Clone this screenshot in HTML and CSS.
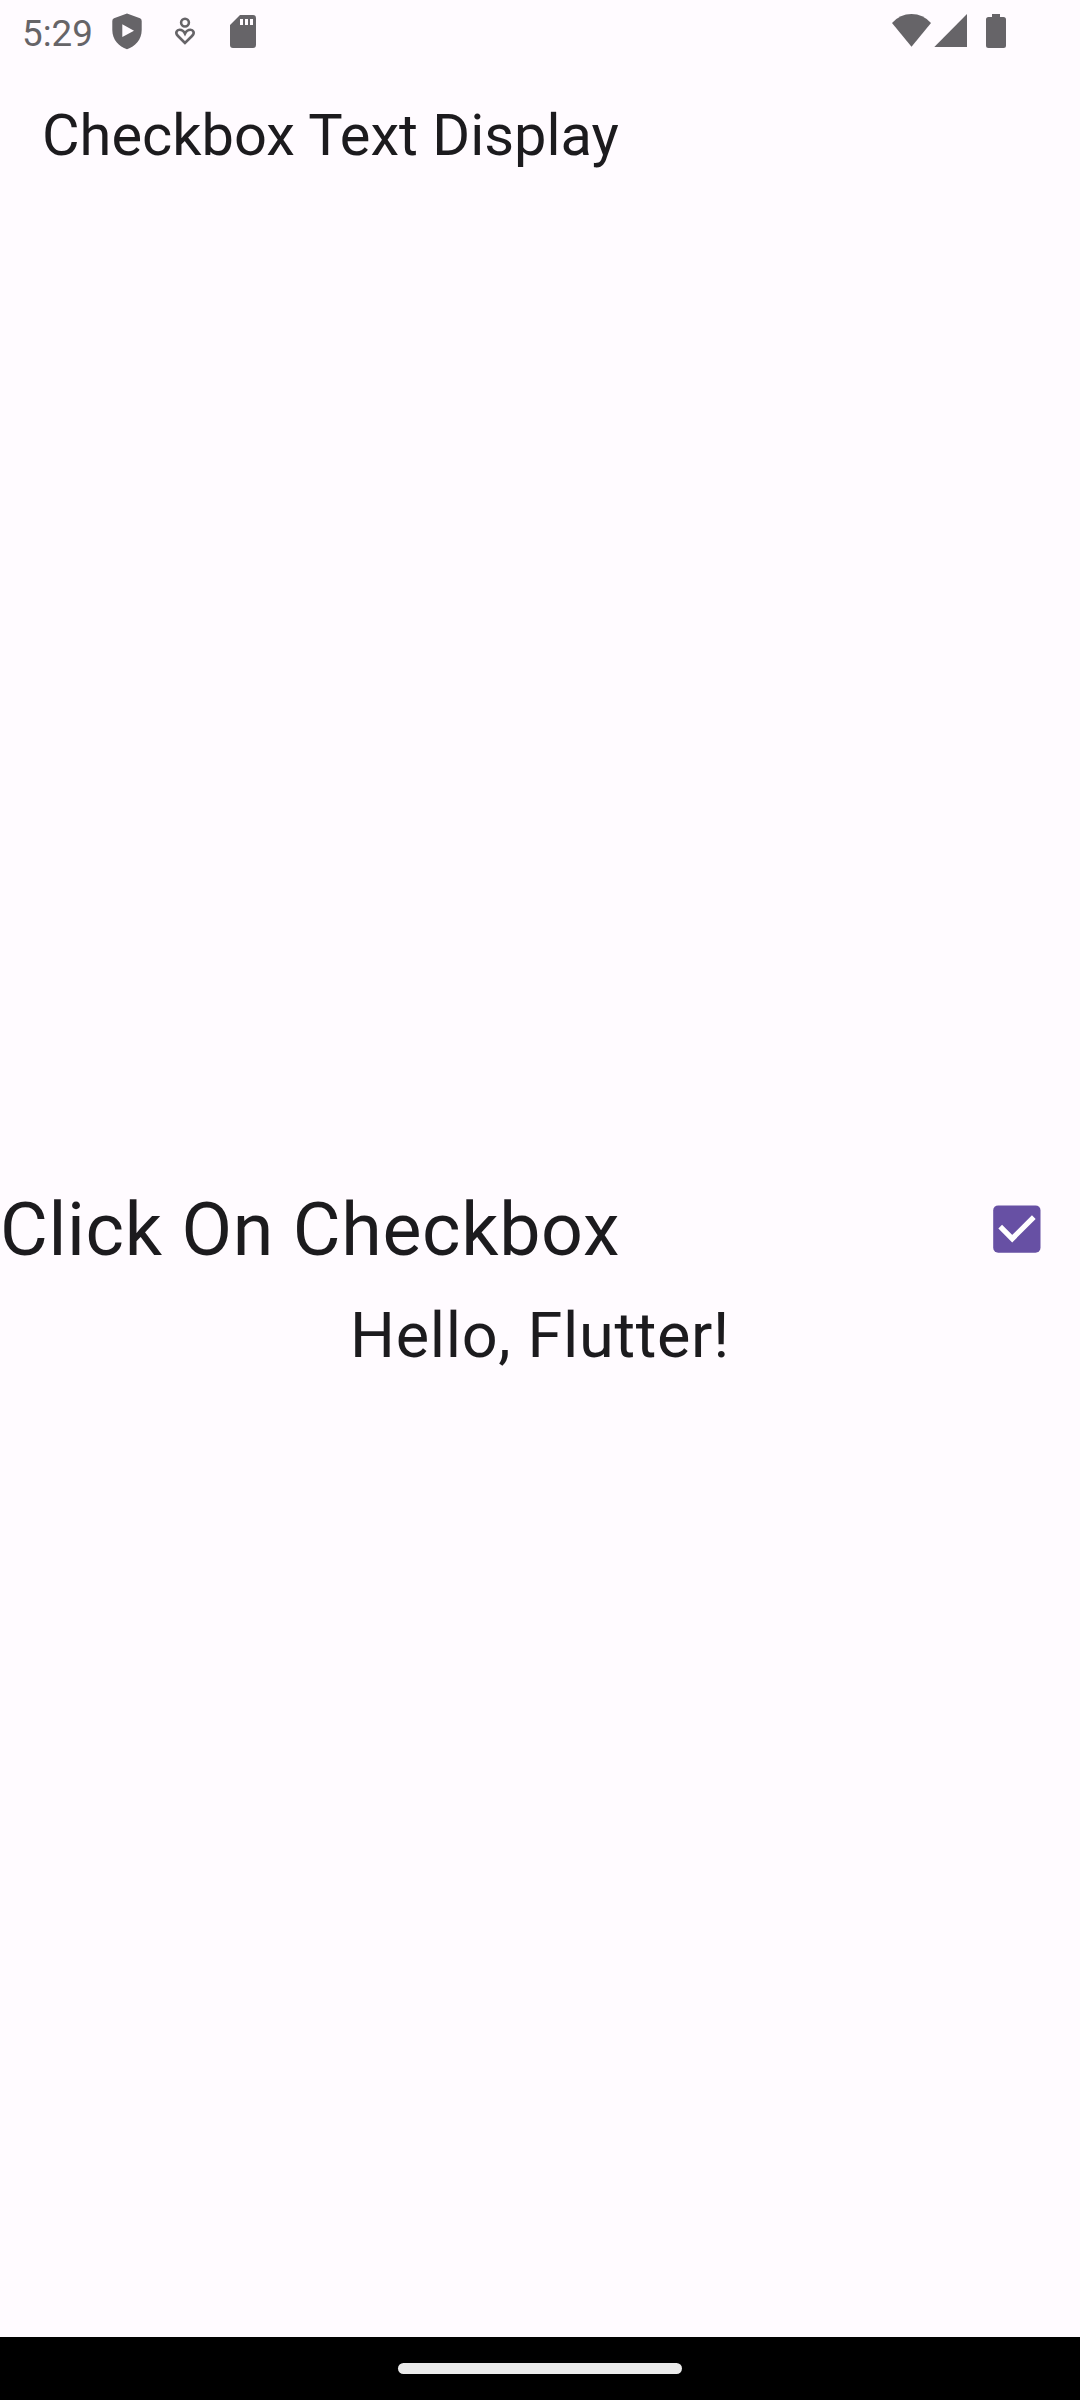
FILE: index.html
```html
<!DOCTYPE html>
<html lang="en">
<head>
<meta charset="utf-8">
<title>Checkbox Text Display</title>
<link rel="stylesheet" href="styles.css">
</head>
<body>
<div class="screen">
  <header class="status-bar">
    <span class="clock">5:29</span>
    <svg class="notifications" width="160" height="63" viewBox="100 0 160 63" aria-hidden="true">
      <path fill-rule="evenodd" d="M127 13.5L140 18.2Q141.7 19 141.7 21V30C141.7 40 135 46.5 127 49.3C119 46.5 112.300 40 112.300 30V21Q112.300 19 114 18.200ZM122.300 24.300V37L134 30.700Z"/>
      <circle class="line" cx="185" cy="22.600" r="3.900"/>
      <path class="line" d="M185 43L178 36C174.500 32.500 177.200 29.800 179.500 29.800C182 29.800 184 31.500 185 33.600C186 31.500 188 29.800 190.500 29.800C192.800 29.800 195.500 32.500 192 36Z"/>
      <path fill-rule="evenodd" d="M240 15H253Q256 15 256 18V45Q256 48 253 48H233Q230 48 230 45V25ZM240 19V25H243V19ZM245 19V25H248V19ZM250 19V25H253V19Z"/>
    </svg>
    <svg class="system" width="120" height="63" viewBox="890 0 120 63" aria-hidden="true">
      <path d="M911.500 46.700L892 23Q900 14 911.500 14T931 23Z"/>
      <path d="M934.300 47L967 14V47Z"/>
      <path d="M992 14H1000V17H1003.500Q1006 17 1006 19.500V45.500Q1006 48 1003.500 48H988.500Q986 48 986 45.500V19.500Q986 17 988.500 17H992Z"/>
    </svg>
  </header>
  <div class="app-bar"><h1 class="title">Checkbox Text Display</h1></div>
  <main class="content">
    <label class="option">
      <span class="option-label">Click On Checkbox</span>
      <span class="checkbox">
        <svg width="48" height="48" viewBox="0 0 48 48" aria-hidden="true">
          <rect class="box" x=".2" y=".4" width="47.300" height="47.300" rx="5"/>
          <path class="tick" d="M7.200 21.700L19.200 33.700L40.800 12.200"/>
        </svg>
      </span>
    </label>
    <p class="message">Hello, Flutter!</p>
  </main>
  <footer class="nav-bar"><div class="handle"></div></footer>
</div>
</body>
</html>
```
FILE: styles.css
```css
body {
  margin: 0;
  background: #fffbff;
  color: #1c1b1e;
  font-family: Roboto, sans-serif;
}

.screen {
  display: flex;
  flex-direction: column;
  width: 1080px;
  height: 2400px;
}

.status-bar {
  display: flex;
  height: 63px;
  padding: 0 70px 0 22px;
  color: #666468;
  fill: #666468;
}

.clock {
  width: 78px;
  font-size: 36.75px;
  line-height: 68px;
  white-space: nowrap;
}

.system {
  margin-left: auto;
}

.line {
  fill: none;
  stroke: #666468;
  stroke-width: 2.6;
}

.app-bar {
  display: flex;
  align-items: center;
  box-sizing: border-box;
  height: 147px;
  padding: 0 42px 3px;
}

.title {
  margin: 0;
  font-size: 57.75px;
  font-weight: 400;
  line-height: 73px;
}

.content {
  display: flex;
  flex: 1;
  flex-direction: column;
  justify-content: center;
}

.option {
  display: flex;
  align-items: center;
  justify-content: space-between;
  height: 126px;
}

.option-label {
  padding-top: 2px;
  font-size: 73.5px;
  letter-spacing: 0.656px;
}

.checkbox {
  display: flex;
  align-items: center;
  justify-content: center;
  width: 126px;
  height: 126px;
}

.box {
  fill: #6750a4;
}

.tick {
  fill: none;
  stroke: #fff;
  stroke-width: 5.25;
}

.message {
  margin: 0;
  padding-bottom: 2px;
  font-size: 63px;
  letter-spacing: 0.656px;
  line-height: 88px;
  text-align: center;
}

.nav-bar {
  display: flex;
  justify-content: center;
  height: 63px;
  background: #000;
}

.handle {
  width: 284px;
  height: 11px;
  margin-top: 26px;
  border-radius: 6px;
  background: #ebebeb;
}
```
